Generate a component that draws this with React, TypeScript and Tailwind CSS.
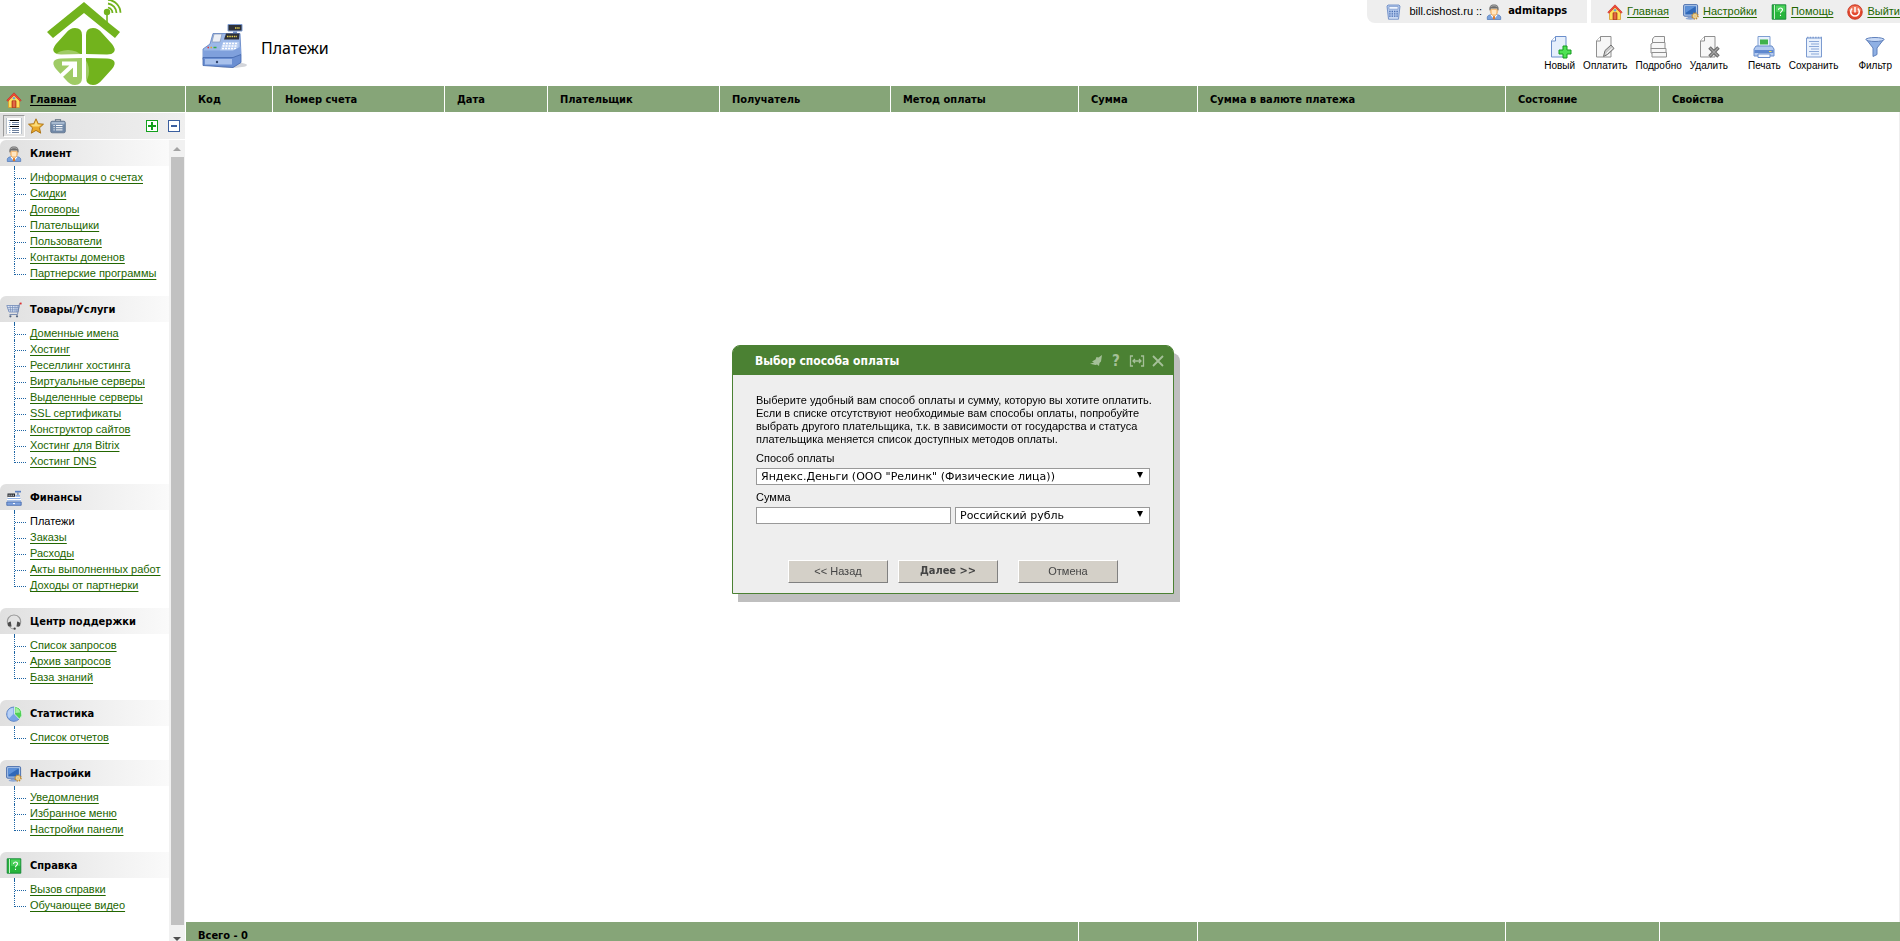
import React from 'react';

type IconProps = { className?: string };

type MenuGroup = {
  title: string;
  Icon: (props: IconProps) => React.ReactElement;
  items: string[];
};

function HomeIcon({ className }: IconProps) {
  return (
    <svg viewBox="0 0 16 16" className={className} aria-hidden="true">
      <path d="M2.500 7.500L8 2.500l5.500 5V15.500h-11z" fill="#fde05a" stroke="#d99a2a" strokeWidth=".8" />
      <path d="M8 .8L.8 8.200l1.100 1.100L8 3.200l6.100 6.100 1.100-1.100z" fill="#f0483a" stroke="#c5281d" strokeWidth=".6" />
      <path d="M6 15.500V8.800h4v6.700z" fill="#d9502f" stroke="#a5341b" strokeWidth=".7" />
      <path d="M8 9v6.300" stroke="#f39a6a" strokeWidth=".7" />
      <circle cx="8" cy="6.300" r="1.200" fill="#6e9fdc" />
    </svg>
  );
}

function UserIcon({ className }: IconProps) {
  return (
    <svg viewBox="0 0 16 16" className={className} aria-hidden="true">
      <path d="M1.300 15.500v-2.200c0-1.500 1.700-2.300 3.500-2.600h6.400c1.800.3 3.500 1.100 3.500 2.600v2.200z" fill="#7ba3dc" stroke="#4a72b4" strokeWidth=".7" />
      <path d="M4.300 10.700L8 15.200l3.700-4.500z" fill="#fff" />
      <path d="M7.200 12h1.600l.5 3.200H6.700z" fill="#e07b2c" />
      <path d="M4.300 5h7.400c.4 3.800-1.400 7-3.700 7S3.900 8.800 4.300 5z" fill="#fcc98a" stroke="#d9954a" strokeWidth=".5" />
      <path d="M6 6h4v4H6z" fill="#ffe6c2" />
      <path d="M3.500 6.300C2.800 2.400 4.800.5 8 .5s5.200 1.900 4.500 5.800l-.8.200-.5-2H4.800l-.5 2z" fill="#6d6d6d" />
      <path d="M4.500 2.800C6 1.400 10 1.400 11.500 2.800" fill="none" stroke="#b5b5b5" strokeWidth=".9" />
    </svg>
  );
}

function CartIcon({ className }: IconProps) {
  return (
    <svg viewBox="0 0 16 16" className={className} aria-hidden="true">
      <path d="M.8 3.500h12.400L12 10H3z" fill="#dfe7f5" stroke="#7089b8" strokeWidth=".8" />
      <path d="M1.500 5.600h11.300M2 7.800h10.500M4 3.500l.8 6.500M6.600 3.500V10M9 3.500V10M11.300 3.500L10.600 10" stroke="#7089b8" strokeWidth=".7" />
      <path d="M15 1.600h-1.500L11.500 12.500h-8" fill="none" stroke="#6f84ad" strokeWidth=".9" />
      <path d="M13.800.6h1.800v1.800h-1.800z" fill="#dc3030" />
      <circle cx="4.400" cy="14.300" r="1.100" fill="#52637f" />
      <circle cx="11" cy="14.300" r="1.100" fill="#52637f" />
    </svg>
  );
}

function SmallRegisterIcon({ className }: IconProps) {
  return (
    <svg viewBox="0 0 16 16" className={className} aria-hidden="true">
      <path d="M9 .8h6v1.700H9z" fill="#5a81c4" />
      <path d="M11.300 2.500h1.200V5h-1.200z" fill="#6b7e9f" />
      <path d="M1.500 3.500h7.500V7H1.500z" fill="#23272f" />
      <path d="M2.500 5.200h5.500" stroke="#fff" strokeDasharray="1.200 .9" />
      <path d="M2 7.300h12M1 9.300h14" stroke="#fff" strokeWidth="1.300" />
      <path d="M9.500 5H14v1.700H9.500zM1.500 8h13v1h-13z" fill="#8fb0e4" />
      <path d="M1 10h14v1.500H1z" fill="#a9c2ea" />
      <path d="M.8 12h14.400v3.300H.8z" fill="#7fa3e0" stroke="#4467aa" strokeWidth=".8" />
      <path d="M7 13.600h2" stroke="#fff" />
    </svg>
  );
}

function HeadsetIcon({ className }: IconProps) {
  return (
    <svg viewBox="0 0 16 16" className={className} aria-hidden="true">
      <path d="M1.800 10C.2 5 3.500 1 8 1s7.800 4 6.200 9" fill="none" stroke="#9a9a9a" strokeWidth="1.200" />
      <path d="M3 8l1.800-.6.700 5-1.800.4C1.200 12.400 1 9.200 3 8z" fill="#4a4a4a" />
      <path d="M13 8l-1.800-.6-.7 5 1.800.4C14.800 12.400 15 9.200 13 8z" fill="#4a4a4a" />
      <path d="M3.800 12.800c.6 1.500 2 2 4.200 2" fill="none" stroke="#999" />
      <circle cx="8.700" cy="14.700" r="1.100" fill="#444" />
    </svg>
  );
}

function PieIcon({ className }: IconProps) {
  return (
    <svg viewBox="0 0 16 16" className={className} aria-hidden="true">
      <circle cx="7.800" cy="8.200" r="7.200" fill="#78a4e6" stroke="#4a74ba" strokeWidth=".7" />
      <path d="M1.500 6.500A6.400 6.400 0 0 1 7.300 1.800V8L3 12.500a7 7 0 0 1-1.500-6z" fill="#b6d0f6" />
      <path d="M8.500.700a7.200 7.200 0 0 1 5 12.500L8.500 8z" fill="#4fcf55" stroke="#fff" strokeWidth=".7" />
      <path d="M9.400 1.700a6 6 0 0 1 4.800 4.800L9.400 7z" fill="#a3ee9f" />
    </svg>
  );
}

function MonitorIcon({ className }: IconProps) {
  return (
    <svg viewBox="0 0 16 16" className={className} aria-hidden="true">
      <rect x=".6" y=".6" width="14" height="11.600" rx="1.200" fill="#a9c4ea" stroke="#3f65a6" strokeWidth=".9" />
      <path d="M2.300 2.300h10.600v8.200H2.300z" fill="#2f68b8" />
      <path d="M2.300 2.300h10.600L2.300 9z" fill="#5b90d8" />
      <path d="M5.500 12.500h4l1 2H4z" fill="#7d98c4" />
      <ellipse cx="7.300" cy="14.600" rx="4.600" ry="1.100" fill="#8ea9d6" />
      <circle cx="12" cy="12" r="2.800" fill="none" stroke="#c0892e" strokeWidth="1.800" strokeDasharray="1.200 1" />
      <circle cx="12" cy="12" r="2.400" fill="#fbe3a0" stroke="#bf8a33" strokeWidth=".5" />
      <circle cx="12" cy="12" r=".9" fill="#fff" stroke="#bf8a33" strokeWidth=".5" />
    </svg>
  );
}

function BookIcon({ className }: IconProps) {
  return (
    <svg viewBox="0 0 16 16" className={className} aria-hidden="true">
      <path d="M1.200.8h13.600v14.400H1.200z" fill="#27b53c" stroke="#118433" strokeWidth=".9" />
      <path d="M3.500 1v14" stroke="#d9f5dc" strokeWidth=".9" />
      <path d="M5 1.500h9.200v6.300H5z" fill="#4bd05b" />
      <path d="M7.500 5.900c0-2.500 4-2.500 4-.1 0 1.600-2 1.700-2 3.500M9.500 10.800V12" fill="none" stroke="#fff" strokeWidth="1.100" />
    </svg>
  );
}

function PowerIcon({ className }: IconProps) {
  return (
    <svg viewBox="0 0 16 16" className={className} aria-hidden="true">
      <circle cx="8" cy="8" r="7.300" fill="#e2492f" stroke="#c5301d" strokeWidth=".8" />
      <path d="M1.600 7a6.500 6.500 0 0 1 12.800 0c-3 1.700-9.800 1.700-12.800 0z" fill="#f0785c" />
      <path d="M5.200 4.500a4.300 4.300 0 1 0 5.600 0M8 3v5.500" fill="none" stroke="#fff" strokeWidth="1.500" />
    </svg>
  );
}

function CalculatorIcon({ className }: IconProps) {
  return (
    <svg viewBox="0 0 16 16" className={className} aria-hidden="true">
      <path d="M3 1h11l1 1-1.500 13.200h-10L2 2z" fill="#b5caee" stroke="#6d8cc4" strokeWidth=".9" />
      <path d="M4 2.500h9v2.700H4z" fill="#f0f6ff" stroke="#6d8cc4" strokeWidth=".6" />
      <path d="M4.200 7.500h8.600M4.200 9.800h8.600M4.200 12.100h8.600" stroke="#4a6fb2" strokeWidth="1.300" strokeDasharray="1.400 1" />
      <path d="M4.200 14h8.600" stroke="#fff" strokeWidth=".6" />
    </svg>
  );
}

function StarIcon({ className }: IconProps) {
  return (
    <svg viewBox="0 0 16 16" className={className} aria-hidden="true">
      <path d="M8 .8l2.200 4.900 5.300.5-4 3.600 1.200 5.400L8 12.400l-4.700 2.800 1.200-5.400-4-3.600 5.300-.5z" fill="#e9a92c" stroke="#a86e10" strokeWidth=".9" strokeLinejoin="round" />
      <path d="M8 2.500l1.600 4 4 .3-3 1.700L5 8.400 2.600 6.800l3.800-.3z" fill="#fbdc7a" />
    </svg>
  );
}

function CaseIcon({ className }: IconProps) {
  return (
    <svg viewBox="0 0 16 16" className={className} aria-hidden="true">
      <path d="M5.500 3.200V1.600h5v1.600" fill="none" stroke="#7b8794" strokeWidth="1.200" />
      <rect x=".7" y="3.200" width="14.600" height="11.600" rx="1.500" fill="#7189a8" stroke="#5c708a" strokeWidth=".8" />
      <path d="M1.500 4h13v2.300h-13z" fill="#a7b9cf" />
      <path d="M3.500 7.500h1.200M6 7.500h6.500M3.500 9.700h1.200M6 9.700h6.500M3.500 11.900h1.200M6 11.900h6.500" stroke="#fff" />
    </svg>
  );
}

function ListIcon({ className }: IconProps) {
  return (
    <svg viewBox="0 0 16 16" className={className} aria-hidden="true">
      <path d="M0 0h16v16H0z" fill="#fff" />
      <path d="M.5 0v16M15.500 0v16" stroke="#b9c1ca" />
      <path d="M2.500 2.500h2M2.500 8.500h2M3 4.500h1.500M3 6.500h1.500M3 10.500h1.500M3 12.500h1.500M3 14.500h1.500" stroke="#8faaca" />
      <path d="M4 2.500h9M4 8.500h9" stroke="#000" />
      <path d="M6 4.500h7M6 6.500h7M6 10.500h7M6 12.500h7M6 14.500h7" stroke="#6c7f9c" />
    </svg>
  );
}

function Logo() {
  return (
    <svg viewBox="0 0 76 86" className="h-[86px] w-[76px]" role="img" aria-label="CISHost">
      <path d="M37 2L0 32l6 6 31-25 31 25 5-6-10-8z" fill="#72b31d" />
      <circle cx="60" cy="12" r="3.200" fill="#72b31d" />
      <path d="M60 12v12" stroke="#72b31d" strokeWidth="1.600" />
      <path d="M61 7.500a6 6 0 0 1 4.500 5.500M61 3.500a10 10 0 0 1 8.500 9.500M61-.2a13.500 13.500 0 0 1 12.500 13" fill="none" stroke="#72b31d" strokeWidth="1.800" />
      <path d="M35 54V35q0-7-7-7-5 0-9 5L9 44q-4 5-2 8 2 2.500 7 2.500z" fill="#72b31d" />
      <path d="M39 54V35q0-7 7-7 5 0 9 5l10 11q4 5 2 8-2 2.500-7 2.500z" fill="#72b31d" />
      <path d="M39 58v20q0 7 7 7 5 0 9-5l10-11q4-5 2-8-2-2.500-7-2.500z" fill="#72b31d" />
      <path d="M35 58v20q0 7-7 7-5 0-9-5L9 69q-4-5-2-8 2-2.500 7-2.500z" fill="#72b31d" />
      <circle cx="21" cy="71" r="21" fill="#fff" opacity=".32" />
      <path d="M14 76l13-12M15 63.500h13V77" fill="none" stroke="#fff" strokeWidth="4" />
    </svg>
  );
}

function CashRegister() {
  return (
    <svg viewBox="0 0 48 48" className="h-12 w-12" aria-hidden="true">
      <ellipse cx="29" cy="42" rx="17" ry="3" fill="#d3d5da" />
      <path d="M27 1.500h14v6.500H27z" fill="#2c2f38" stroke="#7d9bd0" />
      <path d="M34 5h5" stroke="#e8d34e" strokeWidth="1.500" strokeDasharray="1.500 .7" />
      <path d="M32 8.500h4V11h-4z" fill="#6c8cc4" />
      <path d="M12 10.500h27l1 21-8 5H2V26l7-5z" fill="#9cb8e8" stroke="#5c7fc0" strokeWidth=".8" />
      <path d="M25 10.500h13.500l-.5 6H23z" fill="#2c2f38" />
      <path d="M26 13.500h10" stroke="#e8d34e" strokeWidth="1.500" strokeDasharray="1.500 .8" />
      <path d="M13 11h8l-2 8h-8z" fill="#eceff5" stroke="#7f93b8" strokeWidth=".7" />
      <path d="M22 19h16l-1 9H19z" fill="#b9cef2" />
      <path d="M22 20.500h14M21.500 23h14M21 25.500h14" stroke="#fff" strokeWidth="1.500" strokeDasharray="2 1" />
      <path d="M6.500 24.500H8" stroke="#d33" strokeWidth="1.500" />
      <path d="M9.500 24.500H11" stroke="#e8a52e" strokeWidth="1.500" />
      <path d="M12.500 24.500h3" stroke="#3a4" strokeWidth="1.500" />
      <path d="M2 27.500h30l8-4v8l-8 3H2z" fill="#7fa0dc" />
      <path d="M2 34.500h30l8-3v8l-8 5-30-2z" fill="#6b8fd2" stroke="#4166ac" strokeWidth=".8" />
      <path d="M4 36h27v5.500H4z" fill="#a8c1ec" />
      <circle cx="16" cy="39" r="1.200" fill="#33466e" />
    </svg>
  );
}

const grey = '#8f8f8f';

function NewIcon({ className }: IconProps) {
  return (
    <svg viewBox="0 0 24 24" className={className} aria-hidden="true">
      <path d="M7.500 1.500H18v20.500H3.500V6z" fill="#e6effc" stroke="#6b8ecb" />
      <path d="M7.500 1.500V6h-4" fill="#fff" stroke="#6b8ecb" />
      <path d="M15 11h4v4h4v4h-4v4h-4v-4h-4v-4h4z" fill="#4de254" stroke="#149a1e" />
    </svg>
  );
}

function PayIcon({ className }: IconProps) {
  return (
    <svg viewBox="0 0 24 24" className={className} aria-hidden="true">
      <path d="M7.500 1.500H18v20.500H3.500V6z" fill="#f7f7f7" stroke={grey} />
      <path d="M7.500 1.500V6h-4" fill="#fff" stroke={grey} />
      <path d="M10.500 21.500l1.500-6L18 10l3 3.500-6.500 6z" fill="#c9c9c9" stroke="#6f6f6f" />
      <path d="M13.500 18.500l6-5.500" stroke="#fff" />
    </svg>
  );
}

function DetailsIcon({ className }: IconProps) {
  return (
    <svg viewBox="0 0 24 24" className={className} aria-hidden="true">
      <path d="M7.500 1.500h10v7h-12V4z" fill="#f7f7f7" stroke={grey} />
      <path d="M4 9l2-1.500h12V14H4z" fill="#f7f7f7" stroke={grey} />
      <path d="M4 13.500h15V18H4z" fill="#f7f7f7" stroke={grey} />
      <path d="M5 17.500h14.500V22H5z" fill="#f7f7f7" stroke={grey} />
    </svg>
  );
}

function DeleteIcon({ className }: IconProps) {
  return (
    <svg viewBox="0 0 24 24" className={className} aria-hidden="true">
      <path d="M7.500 1.500H18v20.500H3.500V6z" fill="#f7f7f7" stroke={grey} />
      <path d="M7.500 1.500V6h-4" fill="#fff" stroke={grey} />
      <path d="M12.500 12.500l9 9M21.500 12.500l-9 9" stroke="#6a6a6a" strokeWidth="3.500" />
      <path d="M13 13l8 8M21 13l-8 8" stroke="#a5a5a5" strokeWidth="1.300" />
    </svg>
  );
}

function PrintIcon({ className }: IconProps) {
  return (
    <svg viewBox="0 0 24 24" className={className} aria-hidden="true">
      <path d="M6 1.500h12V12H6z" fill="#e8f1fd" stroke="#7f9fd2" />
      <path d="M8 4.500h8v5H8z" fill="#3fb24c" />
      <path d="M4 11h16l2 3v7H2v-7z" fill="#b3caf0" stroke="#6b8ecb" />
      <path d="M2.500 15h19v3h-19z" fill="#5f88cf" />
      <path d="M17 16.500h2.500" stroke="#f5e34f" />
      <path d="M6 19h12v3.500H6z" fill="#f4f8ff" stroke="#6b8ecb" />
    </svg>
  );
}

function SaveIcon({ className }: IconProps) {
  return (
    <svg viewBox="0 0 24 24" className={className} aria-hidden="true">
      <path d="M4.500 3h15v19h-15z" fill="#eaf2fd" stroke="#7c9bd0" />
      <path d="M5 2.500h15" stroke="#7c9bd0" strokeWidth="1.500" strokeDasharray="1.500 1.200" />
      <path d="M7 6.500h10M9 9h8M7 11.500h10M9 14h8M7 16.500h10M9 19h8" stroke="#8ba8d8" />
    </svg>
  );
}

function FilterIcon({ className }: IconProps) {
  return (
    <svg viewBox="0 0 24 24" className={className} aria-hidden="true">
      <path d="M3 4l7 9v8.500l4-2V13l7-9z" fill="#8fb0e4" stroke="#5f80bb" />
      <ellipse cx="12" cy="4.500" rx="9" ry="2" fill="#c9daf6" stroke="#5f80bb" />
    </svg>
  );
}

const groups: MenuGroup[] = [
  {
    title: 'Клиент',
    Icon: UserIcon,
    items: ['Информация о счетах', 'Скидки', 'Договоры', 'Плательщики', 'Пользователи', 'Контакты доменов', 'Партнерские программы'],
  },
  {
    title: 'Товары/Услуги',
    Icon: CartIcon,
    items: ['Доменные имена', 'Хостинг', 'Реселлинг хостинга', 'Виртуальные серверы', 'Выделенные серверы', 'SSL сертификаты', 'Конструктор сайтов', 'Хостинг для Bitrix', 'Хостинг DNS'],
  },
  {
    title: 'Финансы',
    Icon: SmallRegisterIcon,
    items: ['Платежи', 'Заказы', 'Расходы', 'Акты выполненных работ', 'Доходы от партнерки'],
  },
  { title: 'Центр поддержки', Icon: HeadsetIcon, items: ['Список запросов', 'Архив запросов', 'База знаний'] },
  { title: 'Статистика', Icon: PieIcon, items: ['Список отчетов'] },
  { title: 'Настройки', Icon: MonitorIcon, items: ['Уведомления', 'Избранное меню', 'Настройки панели'] },
  { title: 'Справка', Icon: BookIcon, items: ['Вызов справки', 'Обучающее видео'] },
];

const columns = [
  { title: 'Код', width: 'w-[87px]' },
  { title: 'Номер счета', width: 'w-[172px]' },
  { title: 'Дата', width: 'w-[103px]' },
  { title: 'Плательщик', width: 'w-[172px]' },
  { title: 'Получатель', width: 'w-[171px]' },
  { title: 'Метод оплаты', width: 'w-[188px]' },
  { title: 'Сумма', width: 'w-[119px]' },
  { title: 'Сумма в валюте платежа', width: 'w-[308px]' },
  { title: 'Состояние', width: 'w-[154px]' },
  { title: 'Свойства', width: '' },
];

const toolbar = [
  { title: 'Новый', Icon: NewIcon, space: '' },
  { title: 'Оплатить', Icon: PayIcon, space: 'ml-2' },
  { title: 'Подробно', Icon: DetailsIcon, space: 'ml-2' },
  { title: 'Удалить', Icon: DeleteIcon, space: 'ml-2' },
  { title: 'Печать', Icon: PrintIcon, space: 'ml-5' },
  { title: 'Сохранить', Icon: SaveIcon, space: 'ml-2' },
  { title: 'Фильтр', Icon: FilterIcon, space: 'ml-5' },
];

const topLinks = [
  { title: 'Главная', Icon: HomeIcon },
  { title: 'Настройки', Icon: MonitorIcon },
  { title: 'Помощь', Icon: BookIcon },
  { title: 'Выйти', Icon: PowerIcon },
];

const bold = "font-['DejaVu_Sans_Condensed'] font-bold";

// Tree connector runs down the left edge and stops at the last row.
function MenuItem({ title, last }: { title: string; last: boolean }) {
  return (
    <li className="flex h-4 items-start pl-3.5">
      <span className={`w-3 shrink-0 border-l border-dotted border-[#1c64a4] ${last ? 'h-[11px]' : 'h-4'}`}>
        <span className="block h-[11px] border-b border-dotted border-[#1c64a4]" />
      </span>
      <span className="pt-px pl-1 leading-4 whitespace-nowrap">
        {title === 'Платежи' ? title : <a href="#" className="text-[#226600] underline underline-offset-2">{title}</a>}
      </span>
    </li>
  );
}

function Sidebar() {
  return (
    <aside className="flex w-[185px] shrink-0 flex-col">
      <div className="flex h-[26px] shrink-0 items-center bg-[#86a578] pt-0.5 pl-1.5">
        <HomeIcon className="h-4 w-4" />
        <a href="#" className={`pl-2 underline underline-offset-2 ${bold}`}>Главная</a>
      </div>
      <div className="mt-px flex h-[26px] shrink-0 items-center bg-linear-to-r from-[#e0e0e0] to-[#efefef] px-[3px]">
        <button type="button" aria-label="Меню" className="flex h-[22px] w-[22px] items-center justify-center border border-t-[#9a9a9a] border-r-white border-b-white border-l-[#9a9a9a]">
          <ListIcon className="h-4 w-4" />
        </button>
        <button type="button" aria-label="Избранное" className="ml-[3px]"><StarIcon className="h-4 w-4" /></button>
        <button type="button" aria-label="Задачи" className="ml-1.5"><CaseIcon className="h-4 w-4" /></button>
        <button type="button" aria-label="Развернуть" className="ml-auto h-3 w-3 border border-[#12a01c] bg-white">
          <svg viewBox="0 0 10 10"><path d="M1 5h8M5 1v8" stroke="#12a01c" strokeWidth="2" /></svg>
        </button>
        <button type="button" aria-label="Свернуть" className="mr-0.5 ml-2.5 h-3 w-3 border border-[#3a5f9f] bg-white">
          <svg viewBox="0 0 10 10"><path d="M2 5h6" stroke="#3a5f9f" strokeWidth="2" /></svg>
        </button>
      </div>
      <div className="mt-px flex min-h-0 flex-1">
        <nav className="min-w-0 flex-1 overflow-hidden">
          {groups.map(({ title, Icon, items }) => (
            <section key={title} className="pb-4">
              <h2 className={`flex h-[26px] items-center rounded-tl-md bg-linear-to-r from-[#e0e0e0] to-[#fafafa] pt-0.5 pl-1.5 ${bold}`}>
                <Icon className="h-4 w-4" />
                <span className="pl-2">{title}</span>
              </h2>
              <ul>
                <li className="ml-3.5 h-0.5 border-l border-dotted border-[#1c64a4]" />
                {items.map((item, i) => (
                  <MenuItem key={item} title={item} last={i === items.length - 1} />
                ))}
              </ul>
            </section>
          ))}
        </nav>
        <div className="flex w-4 shrink-0 flex-col items-center bg-[#f1f1f1]">
          <svg viewBox="0 0 16 17" className="h-[17px] w-4 shrink-0"><path d="M4 11l4-4 4 4z" fill="#a3a3a3" /></svg>
          <div className="w-[13px] flex-1 bg-[#c1c1c1]" />
          <svg viewBox="0 0 16 16" className="h-4 w-4 shrink-0"><path d="M4 12h8l-4 4z" fill="#505050" /></svg>
        </div>
      </div>
    </aside>
  );
}

function Header() {
  return (
    <header className="flex h-[86px] shrink-0">
      <div className="w-[185px] pl-[47px]"><Logo /></div>
      <div className="flex flex-1 items-center pt-2 pl-4">
        <CashRegister />
        <h1 className="pt-0.5 pl-3 font-['Noto_Sans'] text-base">Платежи</h1>
      </div>
      <div className="flex flex-col">
        <div className="flex h-[23px] justify-end gap-1">
          <div className="flex items-center rounded-bl-lg bg-[#eee] pr-5 pl-[18px]">
            <CalculatorIcon className="h-4 w-4" />
            <span className="pl-2">bill.cishost.ru ::</span>
            <UserIcon className="ml-1 h-4 w-4" />
            <b className={`pl-1.5 ${bold}`}>admitapps</b>
          </div>
          <nav className="flex items-center gap-3.5 bg-[#eee] pl-4">
            {topLinks.map(({ title, Icon }) => (
              <a key={title} href="#" className="flex items-center gap-1 text-[#226600] underline underline-offset-2">
                <Icon className="h-4 w-4" />
                {title}
              </a>
            ))}
          </nav>
        </div>
        <div className="flex justify-end pt-3 pr-2 text-[10px]">
          {toolbar.map(({ title, Icon, space }) => (
            <button key={title} type="button" className={`flex flex-col items-center gap-px leading-3 ${space}`}>
              <Icon className="h-6 w-6" />
              {title}
            </button>
          ))}
        </div>
      </div>
    </header>
  );
}

function PaymentsTable() {
  return (
    <table className="h-[calc(100vh-79px)] w-full table-fixed border-collapse text-left">
      <thead className={`bg-[#86a578] ${bold}`}>
        <tr className="h-[26px]">
          {columns.map(({ title, width }) => (
            <th key={title} className={`border-l border-white pt-0.5 pb-0 pl-3 ${width}`}>{title}</th>
          ))}
        </tr>
      </thead>
      <tbody>
        <tr><td colSpan={10} className="border-r border-[#eee]" /></tr>
      </tbody>
      <tfoot className={`bg-[#86a578] ${bold}`}>
        <tr className="h-[26px]">
          <td colSpan={6} className="border-l border-white pt-0.5 pb-0 pl-3">Всего - 0</td>
          <td className="border-l border-white" />
          <td className="border-l border-white" />
          <td className="border-l border-white" />
          <td className="border-l border-white" />
        </tr>
      </tfoot>
    </table>
  );
}

function Select({ id, label, value }: { id: string; label?: string; value: string }) {
  return (
    <span className="relative block">
      <select id={id} aria-label={label} className="block h-[17px] w-full appearance-none border border-[#999] bg-white pl-1 font-['DejaVu_Sans'] text-[11px] leading-[15px]">
        <option>{value}</option>
      </select>
      <svg viewBox="0 0 6 6" className="pointer-events-none absolute top-1 right-[7px] h-1.5 w-1.5"><path d="M0 0h6L3 6z" /></svg>
    </span>
  );
}

const buttonClass = 'h-[23px] w-[100px] border border-t-white border-r-[#808080] border-b-[#808080] border-l-white bg-[#d4d0c8] text-[#444]';

function PaymentDialog() {
  return (
    <div role="dialog" aria-label="Выбор способа оплаты" className="w-[442px] rounded-t-lg border border-[#4b8133] bg-[#eee] shadow-[6px_8px_0_#bfbfbf]">
      <div className="flex h-[29px] items-center rounded-t-md bg-[#4b8133] pr-2 pl-[22px]">
        <h2 className={`flex-1 text-xs text-white ${bold}`}>Выбор способа оплаты</h2>
        <div className="flex items-center gap-1.5 text-[#a5c099]">
          <button type="button" aria-label="Закрепить">
            <svg viewBox="0 0 14 14" className="h-3.5 w-3.5" fill="currentColor"><path d="M13 1L9.500 3.500 7.500 3 6.500 5.500 3 7.500l2 1-4 1.300L6.500 11l1.500-.5 2 1.500.5-3 1.500-1.500z" /></svg>
          </button>
          <button type="button" aria-label="Справка" className={`w-3.5 text-[15px] leading-4 ${bold}`}>?</button>
          <button type="button" aria-label="Развернуть">
            <svg viewBox="0 0 16 14" className="h-3.5 w-4" fill="none" stroke="currentColor" strokeWidth="1.300"><path d="M4 2H1.500v10H4M12 2h2.500v10H12M4 7h8M6 5L4 7l2 2M10 5l2 2-2 2" /></svg>
          </button>
          <button type="button" aria-label="Закрыть">
            <svg viewBox="0 0 14 14" className="h-3.5 w-3.5" stroke="currentColor" strokeWidth="1.800"><path d="M2 2l10 10M12 2L2 12" /></svg>
          </button>
        </div>
      </div>
      <div className="px-[23px] pt-[19px] pb-2.5">
        <p className="leading-[13px] whitespace-nowrap">
          Выберите удобный вам способ оплаты и сумму, которую вы хотите оплатить.<br />
          Если в списке отсутствуют необходимые вам способы оплаты, попробуйте<br />
          выбрать другого плательщика, т.к. в зависимости от государства и статуса<br />
          плательщика меняется список доступных методов оплаты.
        </p>
        <label htmlFor="method" className="mt-1.5 mb-[3px] block leading-[13px]">Способ оплаты</label>
        <Select id="method" value={'Яндекс.Деньги (ООО "Релинк" (Физические лица))'} />
        <label htmlFor="amount" className="mt-1.5 mb-[3px] block leading-[13px]">Сумма</label>
        <div className="grid grid-cols-2 gap-1">
          <input id="amount" type="text" className="h-[17px] w-full border border-[#999] bg-white px-1" />
          <Select id="currency" label="Валюта" value="Российский рубль" />
        </div>
        <div className="mt-9 flex justify-center">
          <button type="button" className={buttonClass}>&lt;&lt; Назад</button>
          <button type="button" className={`ml-2.5 ${bold} ${buttonClass}`}>Далее &gt;&gt;</button>
          <button type="button" className={`ml-5 ${buttonClass}`}>Отмена</button>
        </div>
      </div>
    </div>
  );
}

export default function App() {
  return (
    <div className="flex h-screen flex-col overflow-hidden bg-white font-['Liberation_Sans',Arial,sans-serif] text-[11px] text-black">
      <Header />
      <div className="flex min-h-0 flex-1">
        <Sidebar />
        <main className="min-w-0 flex-1 overflow-hidden">
          <PaymentsTable />
        </main>
      </div>
      <div className="fixed inset-0 flex items-center justify-center pb-0.5 pl-1.5">
        <PaymentDialog />
      </div>
    </div>
  );
}
